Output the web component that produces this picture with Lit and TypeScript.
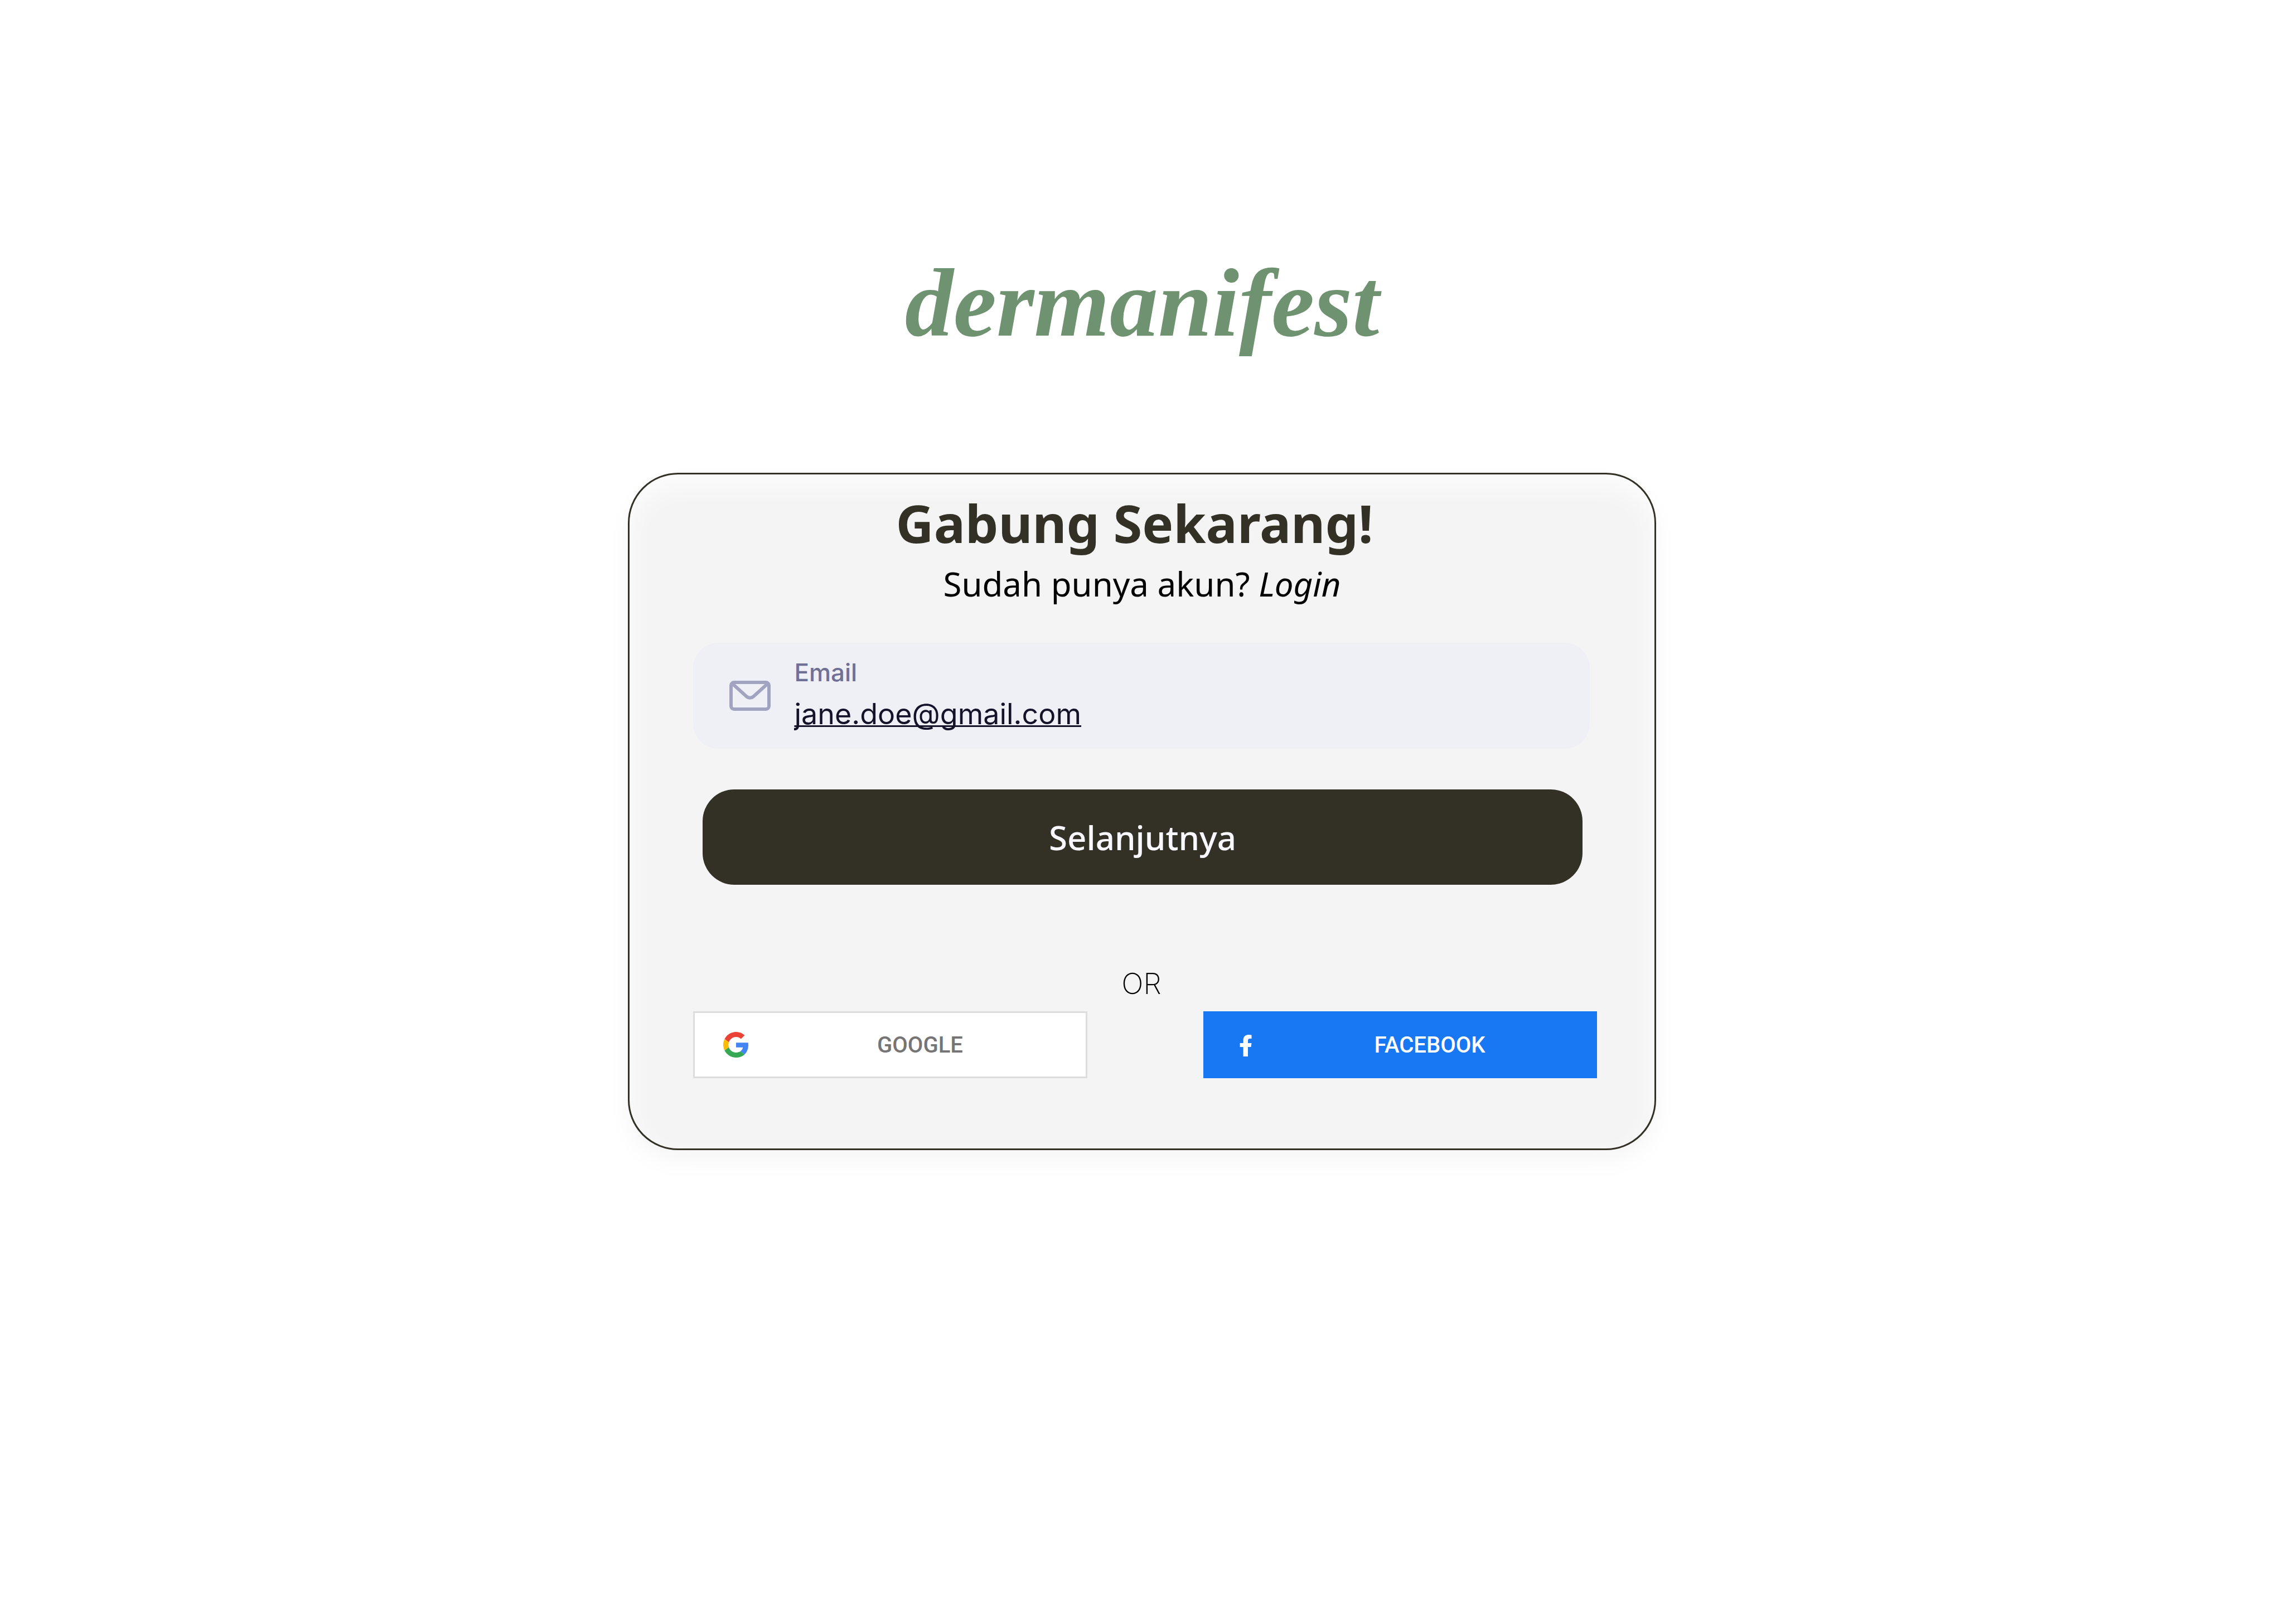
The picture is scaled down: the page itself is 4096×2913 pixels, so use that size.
import { LitElement, html, css } from "lit";
import { customElement } from "lit/decorators.js";

@customElement("app-root")
export class AppRoot extends LitElement {
  static styles = css`
    :host {
      display: block;
      background: #ffffff;
      color: #000000;
      font-family: "Noto Sans", "Open Sans", sans-serif;
    }
    * {
      box-sizing: border-box;
    }
    .page {
      min-height: 100vh;
      display: flex;
      flex-direction: column;
      align-items: center;
      padding: 442px 0 0;
    }
    .logo {
      color: #6f9270;
      font-family: "Liberation Serif", serif;
      font-style: italic;
      font-weight: 700;
      font-size: 174px;
      line-height: 204px;
      margin: 0 0 202px;
    }
    .card {
      width: 45%;
      border: 3px solid #333026;
      border-radius: 90px;
      background: #f4f4f4;
      padding: 30px 103px 126px 114px;
      display: flex;
      flex-direction: column;
      box-shadow:
        0 20px 44px rgba(0, 0, 0, 0.04),
        inset 0 20px 48px rgba(255, 255, 255, 0.8);
    }
    .title {
      margin: 0;
      text-align: center;
      font-size: 94px;
      line-height: 114px;
      font-weight: 700;
      color: #333026;
      padding-right: 38px;
    }
    .sub {
      margin: 16px 0 0;
      text-align: center;
      font-size: 60px;
      line-height: 72px;
      padding-right: 11px;
    }
    .sub a {
      color: inherit;
      font-style: italic;
      text-decoration: none;
    }
    .field {
      display: flex;
      align-items: center;
      gap: 41px;
      height: 190px;
      margin: 70px 13px 0 0;
      padding: 0 64px;
      border-radius: 45px;
      background: #eff0f6;
    }
    .mail {
      width: 76px;
      height: 56px;
      flex: none;
    }
    .stack {
      flex: 1;
      display: flex;
      flex-direction: column;
      gap: 8px;
      padding-bottom: 4px;
      font-family: Inter, "Open Sans", sans-serif;
    }
    .label {
      font-size: 44px;
      line-height: 60px;
      font-weight: 500;
      color: #6f7094;
    }
    .input {
      border: 0;
      padding: 0;
      outline: 0;
      background: transparent;
      width: 100%;
      height: 72px;
      font: inherit;
      font-size: 52px;
      color: #151229;
      text-decoration: underline;
      text-decoration-skip-ink: none;
      text-decoration-thickness: 3px;
    }
    .next {
      height: 171px;
      margin: 73px 26px 0 17px;
      border: 0;
      border-radius: 57px;
      background: #333026;
      color: #f9f7ff;
      font: inherit;
      font-size: 60px;
      font-weight: 500;
    }
    .or {
      margin: 144px 0 0;
      padding-right: 13px;
      text-align: center;
      font-family: Inter, sans-serif;
      font-weight: 200;
      font-size: 52px;
      line-height: 68px;
    }
    .social {
      display: grid;
      grid-template-columns: 1fr 1fr;
      gap: 208px;
      margin-top: 15px;
    }
    .provider {
      height: 120px;
      display: grid;
      grid-template-columns: 46px 1fr;
      gap: 16px;
      align-items: center;
      padding: 0 6px 0 51px;
      border: 3px solid #dddddd;
      background: #ffffff;
      color: #757575;
      font-family: Roboto, sans-serif;
      font-size: 40px;
      font-weight: 500;
      text-align: center;
    }
    .provider.facebook {
      border-color: #1877f2;
      background: #1877f2;
      color: #ffffff;
    }
    .glyph {
      width: 46px;
      height: 46px;
    }
  `;

  render() {
    return html`
      <main class="page">
        <div class="logo">dermanifest</div>
        <form class="card" @submit=${(e: Event) => e.preventDefault()}>
          <h1 class="title">Gabung Sekarang!</h1>
          <p class="sub">Sudah punya akun? <a href="#login">Login</a></p>
          <div class="field">
            <svg class="mail" viewBox="0 0 76 56" fill="none" stroke="#a1a3c0" stroke-width="6" stroke-linejoin="round" aria-hidden="true">
              <rect x="4" y="4" width="68" height="48" rx="5.500" />
              <path d="M6 6 L32 29.500 Q38 34 44 29.500 L70 6" />
            </svg>
            <div class="stack">
              <label class="label" for="email">Email</label>
              <input class="input" id="email" type="email" value="jane.doe@gmail.com" />
            </div>
          </div>
          <button class="next" type="submit">Selanjutnya</button>
          <p class="or">OR</p>
          <div class="social">
            <button class="provider" type="button">
              <svg class="glyph" viewBox="0 0 48 48" aria-hidden="true">
                <path fill="#EA4335" d="M24 9.5c3.54 0 6.71 1.22 9.21 3.6l6.85-6.85C35.9 2.38 30.47 0 24 0 14.62 0 6.51 5.38 2.56 13.22l7.98 6.19C12.43 13.72 17.74 9.5 24 9.5z" />
                <path fill="#4285F4" d="M46.98 24.55c0-1.57-.15-3.09-.38-4.55H24v9.02h12.94c-.58 2.96-2.26 5.48-4.78 7.18l7.73 6c4.51-4.18 7.09-10.36 7.09-17.65z" />
                <path fill="#FBBC05" d="M10.53 28.59c-.48-1.45-.76-2.99-.76-4.59s.27-3.14.76-4.59l-7.98-6.19C.92 16.46 0 20.12 0 24c0 3.88.92 7.54 2.56 10.78l7.97-6.19z" />
                <path fill="#34A853" d="M24 48c6.48 0 11.93-2.13 15.89-5.81l-7.73-6c-2.15 1.45-4.92 2.3-8.16 2.3-6.26 0-11.57-4.22-13.47-9.91l-7.98 6.19C6.51 42.62 14.62 48 24 48z" />
              </svg>
              <span>GOOGLE</span>
            </button>
            <button class="provider facebook" type="button">
              <svg class="glyph" viewBox="0 0 46 46" aria-hidden="true">
                <path fill="#ffffff" d="M17.600 44V27H11.600V20h6v-5.200C17.600 8.500 21.300 5 27 5q3 0 5.500.5V12h-3c-2.800 0-3.500 1.600-3.500 3.600V20h6.500l-1 7H26v17z" />
              </svg>
              <span>FACEBOOK</span>
            </button>
          </div>
        </form>
      </main>
    `;
  }
}
